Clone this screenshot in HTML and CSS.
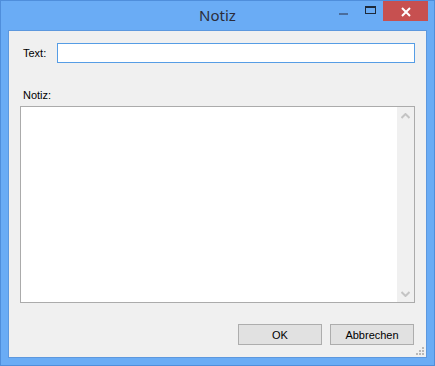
FILE: index.html
```html
<!DOCTYPE html>
<html lang="de">
<head>
    <meta charset="UTF-8">
    <title>Notiz</title>
    <link rel="stylesheet" href="styles.css">
</head>
<body>
<div class="window">
    <div class="titlebar">
        <div></div>
        <div class="title">Notiz</div>
        <div class="controls">
            <div class="ctl ctl-min"><span class="min-glyph"></span></div>
            <div class="ctl ctl-max"><span class="max-glyph"></span></div>
            <div class="ctl ctl-close">
                <svg width="10" height="10" viewBox="0 0 10 10">
                    <path d="M1 1 L9 9 M9 1 L1 9" stroke="#fff" stroke-width="2"/>
                </svg>
            </div>
        </div>
    </div>

    <div class="client">
        <div class="text-row">
            <label for="text" class="label text-label">Text:</label>
            <input type="text" id="text" class="input">
        </div>

        <label for="note" class="label note-label">Notiz:</label>
        <div class="memo">
            <div class="memo-body" id="note"></div>
            <div class="scrollbar">
                <svg width="9" height="6" viewBox="0 0 9 6">
                    <path d="M0.5 5 L4.5 1 L8.5 5" stroke="#c4c4c4" stroke-width="2" fill="none"/>
                </svg>
                <svg width="9" height="6" viewBox="0 0 9 6">
                    <path d="M0.5 1 L4.5 5 L8.5 1" stroke="#c4c4c4" stroke-width="2" fill="none"/>
                </svg>
            </div>
        </div>

        <div class="buttons">
            <button class="btn">OK</button>
            <button class="btn">Abbrechen</button>
        </div>

        <svg class="grip" width="8" height="8" viewBox="0 0 8 8">
            <rect x="6" y="0" width="2" height="2" fill="#b8b8b8"/>
            <rect x="3" y="3" width="2" height="2" fill="#b8b8b8"/>
            <rect x="6" y="3" width="2" height="2" fill="#b8b8b8"/>
            <rect x="0" y="6" width="2" height="2" fill="#b8b8b8"/>
            <rect x="3" y="6" width="2" height="2" fill="#b8b8b8"/>
            <rect x="6" y="6" width="2" height="2" fill="#b8b8b8"/>
        </svg>
    </div>
</div>
</body>
</html>
```

FILE: styles.css
```css
* {
    box-sizing: border-box;
}
body {
    margin: 0;
    font-family: 'Liberation Sans', Arial, sans-serif;
}
.window {
    width: 435px;
    height: 366px;
    border: 1px solid #4f8edb;
    background: #6aacf5;
    display: flex;
    flex-flow: column;
}
.titlebar {
    height: 29px;
    display: grid;
    grid-template-columns: 1fr auto 1fr;
}
.title {
    font-family: 'Noto Sans', sans-serif;
    font-size: 15px;
    line-height: 29px;
    color: #2c2c3a;
    padding-bottom: 1px;
}
.controls {
    display: flex;
    justify-content: flex-end;
    align-items: flex-start;
    padding-right: 6px;
}
.ctl {
    width: 26px;
    height: 20px;
    display: flex;
    align-items: center;
    justify-content: center;
}
.min-glyph {
    width: 9px;
    height: 2px;
    margin-top: 6px;
    margin-right: 1px;
    background: #4a6d9c;
}
.max-glyph {
    width: 11px;
    height: 8px;
    border: 1px solid #1e2a3a;
    border-top-width: 2px;
    margin-top: -2px;
}
.ctl-close {
    width: 45px;
    background: #c75050;
    padding-top: 1px;
}
.client {
    position: relative;
    flex: 1;
    margin: 0 7px 7px 7px;
    background: #f0f0f0;
    border: 1px solid #5d98de;
    padding: 12px 11px 0 11px;
    display: flex;
    flex-flow: column;
    font-size: 11px;
    color: #000;
}
.label {
    line-height: 13px;
}
.text-row {
    display: flex;
    align-items: center;
    height: 20px;
}
.text-label {
    width: 37px;
    padding-left: 3px;
}
.input {
    flex: 1;
    height: 20px;
    border: 1px solid #569de5;
    background: #fff;
    outline: none;
    margin: 0;
}
.note-label {
    margin-top: 26px;
    margin-bottom: 4px;
    padding-left: 3px;
}
.memo {
    height: 197px;
    border: 1px solid #ababab;
    background: #fff;
    display: flex;
}
.memo-body {
    flex: 1;
}
.scrollbar {
    width: 17px;
    background: #f0f0f0;
    display: flex;
    flex-flow: column;
    justify-content: space-between;
    align-items: center;
    padding: 6px 0 5px 0;
}
.buttons {
    display: flex;
    justify-content: flex-end;
    gap: 8px;
    margin-top: 21px;
    padding-right: 1px;
}
.btn {
    width: 84px;
    height: 21px;
    margin: 0;
    border: 1px solid #adadad;
    background: #e1e1e1;
    font-family: 'Liberation Sans', Arial, sans-serif;
    font-size: 11px;
    color: #000;
    padding: 0;
}
.grip {
    position: absolute;
    right: 2px;
    bottom: 2px;
}
```
